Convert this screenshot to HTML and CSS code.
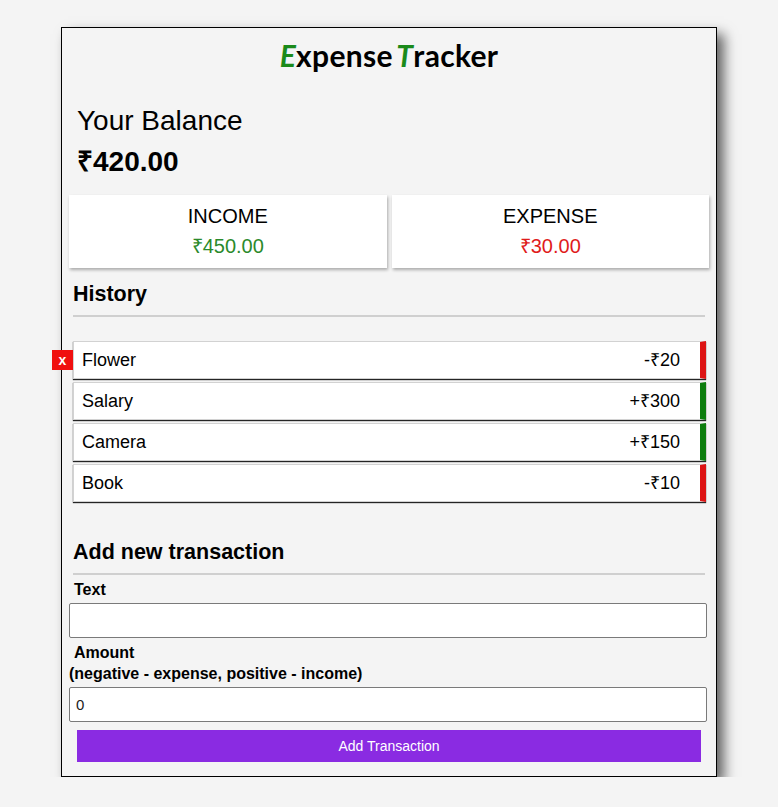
FILE: index.html
```html
<!DOCTYPE html>
<html lang="en">
<head>
<meta charset="UTF-8">
<title>Expense Tracker</title>
<link rel="stylesheet" href="styles.css">
</head>
<body>
<div class="container">
  <h2 class="title"><span class="accent">E</span>xpense <span class="accent">T</span>racker</h2>

  <h4 class="balance-label">Your Balance</h4>
  <h1 class="balance">₹420.00</h1>

  <div class="inc-exp">
    <div class="box">
      <div class="box-label">INCOME</div>
      <div class="money plus">₹450.00</div>
    </div>
    <div class="box">
      <div class="box-label">EXPENSE</div>
      <div class="money minus">₹30.00</div>
    </div>
  </div>

  <h3 class="section">History</h3>
  <ul class="list">
    <li class="item minus">Flower <span>-₹20</span><button class="delete-btn">x</button></li>
    <li class="item plus">Salary <span>+₹300</span></li>
    <li class="item plus">Camera <span>+₹150</span></li>
    <li class="item minus">Book <span>-₹10</span></li>
  </ul>

  <h3 class="section section-add">Add new transaction</h3>
  <form class="form">
    <div class="control">
      <label class="label"><span class="indent">Text</span></label>
      <input class="input" type="text">
    </div>
    <div class="control">
      <label class="label"><span class="indent">Amount</span><br>(negative - expense, positive - income)</label>
      <input class="input" type="text" value="0">
    </div>
    <button class="btn" type="button">Add Transaction</button>
  </form>
</div>
</body>
</html>
```

FILE: styles.css
```css
* { box-sizing: border-box; }

body {
  margin: 0;
  background: #f4f4f4;
  font-family: "Liberation Sans", Arial, sans-serif;
  color: #000;
}

.container {
  width: 656px;
  margin: 27px auto 0;
  padding: 0 7px 14px;
  border: 1px solid #000;
  background: #f4f4f4;
  box-shadow: 7px 7px 12px rgba(0, 0, 0, 0.6);
}

.title {
  margin: 0;
  padding-top: 10px;
  font-family: Lato, "DejaVu Sans", sans-serif;
  font-weight: 700;
  font-size: 30px;
  line-height: 34px;
  text-align: center;
  word-spacing: -4px;
  letter-spacing: 0.3px;
}

.accent {
  color: #1a8a1a;
  font-style: italic;
}

.balance-label {
  margin: 33px 0 0 8px;
  font-size: 28px;
  line-height: 32px;
  font-weight: 400;
}

.balance {
  margin: 9px 0 0 8px;
  font-size: 28px;
  line-height: 32px;
  font-weight: 700;
}

.inc-exp {
  display: flex;
  gap: 5px;
  margin-top: 17px;
}

.box {
  flex: 1;
  background: #fff;
  text-align: center;
  padding: 9px 0 10px;
  box-shadow: 1px 2px 3px rgba(0, 0, 0, 0.3);
}

.box-label {
  font-size: 20px;
  line-height: 24px;
}

.money {
  margin-top: 6px;
  font-size: 20px;
  line-height: 24px;
}

.money.plus { color: #2b8a2b; }
.money.minus { color: #e01b1b; }

.section {
  margin: 13px 4px 0;
  padding-bottom: 8px;
  border-bottom: 2px solid #cfcfcf;
  font-size: 21.5px;
  line-height: 26px;
  font-weight: 700;
}

.section-add {
  margin-top: 37px;
  padding-bottom: 8px;
}

.list {
  list-style: none;
  margin: 24px 3px 0 4px;
  padding: 0;
}

.item {
  position: relative;
  display: flex;
  justify-content: space-between;
  height: 38px;
  margin-bottom: 3px;
  padding: 7px 20px 7px 8px;
  background: #fff;
  border: 1px solid #d2d2d2;
  border-right: 6px solid;
  font-size: 18px;
  line-height: 22px;
  box-shadow: 0 1px 1px rgba(0, 0, 0, 0.85);
}

.item.minus { border-right-color: #dd1414; }
.item.plus { border-right-color: #0d7d0d; }

.delete-btn {
  position: absolute;
  left: -22px;
  top: 8px;
  width: 21px;
  height: 20px;
  padding: 0;
  border: 0;
  background: #f00f0f;
  color: #fff;
  font-family: "Liberation Sans", Arial, sans-serif;
  font-size: 14px;
  font-weight: 700;
  line-height: 20px;
  text-align: center;
}

.form { margin: 0; }

.control { margin-top: 4px; }

.label {
  display: block;
  font-size: 16px;
  line-height: 21px;
  font-weight: 700;
}

.indent { margin-left: 5px; }

.input {
  display: block;
  width: 638px;
  height: 35px;
  margin-top: 3px;
  padding: 0 6px;
  border: 1px solid #7a7a7a;
  border-radius: 2px;
  background: #fff;
  font-family: "Liberation Sans", Arial, sans-serif;
  font-size: 15px;
  color: #222;
}

.btn {
  display: block;
  width: calc(100% - 16px);
  height: 32px;
  margin: 8px 8px 0;
  padding-top: 1px;
  border: 0;
  background: #8a2be2;
  color: #fff;
  font-family: "Liberation Sans", Arial, sans-serif;
  font-size: 14px;
}
```
